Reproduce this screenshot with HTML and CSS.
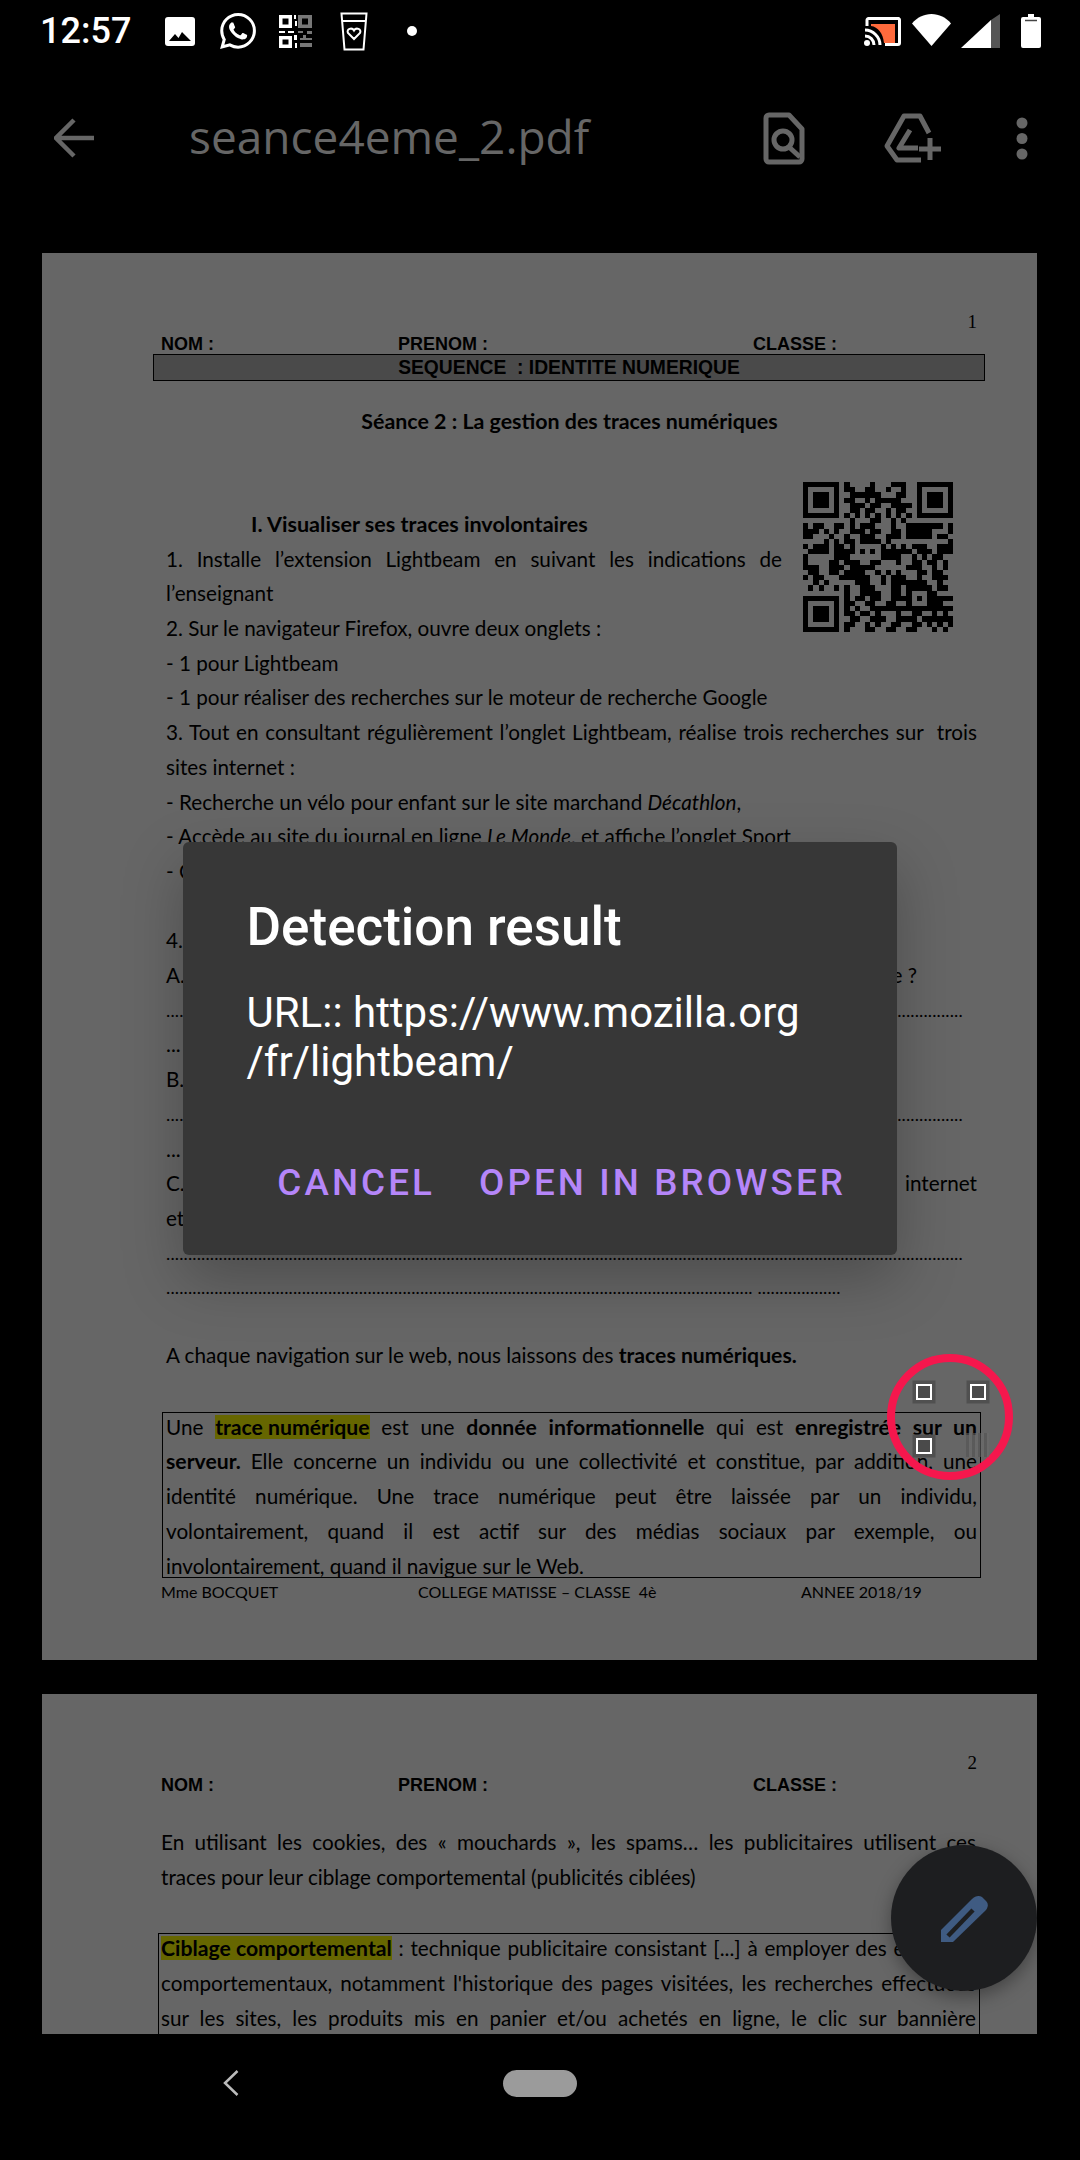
FILE: index.html
```html
<!DOCTYPE html>
<html lang="fr">
<head>
    <meta charset="UTF-8">
    <meta name="viewport" content="width=device-width, initial-scale=1.0">
    <title>seance4eme_2.pdf</title>
    <link rel="stylesheet" href="styles.css">
</head>
<body>
    <div class="status-bar">
        <span class="clock">12:57</span>
        <svg class="ic-image" viewBox="0 0 30 29"><rect width="30" height="29" rx="3" fill="#fff"/><path d="M4 24l6-7 3.5 4 3.5-6 9 9z" fill="#000"/></svg>
        <svg class="ic-whatsapp" viewBox="0 0 24 24"><path fill="#fff" d="M17.472 14.382c-.297-.149-1.758-.867-2.03-.967-.273-.099-.471-.148-.67.15-.197.297-.767.966-.94 1.164-.173.199-.347.223-.644.075-.297-.15-1.255-.463-2.39-1.475-.883-.788-1.48-1.761-1.653-2.059-.173-.297-.018-.458.13-.606.134-.133.298-.347.446-.52.149-.174.198-.298.298-.497.099-.198.05-.371-.025-.52-.075-.149-.669-1.612-.916-2.207-.242-.579-.487-.5-.669-.51-.173-.008-.371-.01-.57-.01-.198 0-.52.074-.792.372-.272.297-1.04 1.016-1.04 2.479 0 1.462 1.065 2.875 1.213 3.074.149.198 2.096 3.2 5.077 4.487.709.306 1.262.489 1.694.625.712.227 1.36.195 1.871.118.571-.085 1.758-.719 2.006-1.413.248-.694.248-1.289.173-1.413-.074-.124-.272-.198-.57-.347m-5.421 7.403h-.004a9.87 9.87 0 01-5.031-1.378l-.361-.214-3.741.982.998-3.648-.235-.374a9.86 9.86 0 01-1.51-5.26c.001-5.45 4.436-9.884 9.888-9.884 2.64 0 5.122 1.03 6.988 2.898a9.825 9.825 0 012.893 6.994c-.003 5.45-4.437 9.884-9.885 9.884m8.413-18.297A11.815 11.815 0 0012.05 0C5.495 0 .16 5.335.157 11.892c0 2.096.547 4.142 1.588 5.945L.057 24l6.305-1.654a11.882 11.882 0 005.683 1.448h.005c6.554 0 11.89-5.335 11.893-11.893a11.821 11.821 0 00-3.48-8.413z"/></svg>
        <svg class="ic-qr" viewBox="0 0 36 35">
            <path d="M1 1h13v13H1zM4.500 4.500h6v6h-6zM1 22h13v12H1zM4.500 25.500h6v5h-6z" fill="#fff" fill-rule="evenodd"/>
            <path d="M20 1h14v13H20zM24 4.500h6v6h-6z" fill="#777" fill-rule="evenodd"/>
            <path d="M16 1h2v4h-2zM17 7h2v5h-2zM1 17h6v2H1zM10 17h6v2h-6zM16 21h3v5h-3zM17 29h2v5h-2z" fill="#fff"/>
            <path d="M20 17h5v2h-5zM29 17h5v3h-5zM22 24h12v2H22zM22 29h12v4H22zM25 21h3v3h-3z" fill="#777"/>
        </svg>
        <svg class="ic-cup" viewBox="0 0 28 39"><path d="M1.500 1.500h25l-3 36h-19zM2 9h24" fill="none" stroke="#fff" stroke-width="2"/><path d="M14 27l-6-6c-2-4 4-6 6-2.500 2-3.500 8-1.500 6 2.500z" fill="none" stroke="#fff" stroke-width="2"/></svg>
        <span class="notif-dot"></span>
        <svg class="ic-cast" viewBox="0 0 37 29"><path d="M3 9V3a1.500 1.500 0 0 1 1.500-1.500h29A1.500 1.500 0 0 1 35.500 3v23a1.500 1.500 0 0 1-1.500 1.500H21" fill="none" stroke="#fff" stroke-width="3"/><path d="M7 7h24v19H20C19 16 14 10 7 9z" fill="#ff6a3c"/><path d="M1 13c8 0 15 7 15 15M1 19c5 0 9 4 9 9" fill="none" stroke="#fff" stroke-width="3"/><circle cx="3" cy="26" r="3" fill="#fff"/></svg>
        <svg class="ic-wifi" viewBox="0 0 39 32"><path d="M0 9.500C5 3.500 12 0 19.500 0S34 3.500 39 9.500L19.500 32z" fill="#fff"/></svg>
        <svg class="ic-signal" viewBox="0 0 39 34"><path d="M0 34L30 6v28z" fill="#fff"/><path d="M30 6l9-6v34h-9z" fill="#555"/></svg>
        <svg class="ic-battery" viewBox="0 0 20 34"><path d="M7 0h6v3h5a2 2 0 0 1 2 2v27a2 2 0 0 1-2 2H2a2 2 0 0 1-2-2V5a2 2 0 0 1 2-2h5z" fill="#fff"/><path d="M4 6.500h12" stroke="#444" stroke-width="1.500"/></svg>
    </div>

    <div class="toolbar">
        <svg class="ic-back" viewBox="0 0 41 40"><path d="M40 20H3M20 2L2 20l18 18" fill="none" stroke="#666" stroke-width="4.500"/></svg>
        <span class="doc-title">seance4eme_2.pdf</span>
        <svg class="ic-docsearch" viewBox="0 0 42 53"><path d="M3 6a3 3 0 0 1 3-3h20l13 14v30a3 3 0 0 1-3 3H6a3 3 0 0 1-3-3z" fill="none" stroke="#666" stroke-width="5" stroke-linejoin="round"/><circle cx="20" cy="28" r="9" fill="none" stroke="#666" stroke-width="5"/><path d="M26 35l11 10" stroke="#666" stroke-width="5"/></svg>
        <svg class="ic-driveadd" viewBox="0 0 57 50"><path d="M45 20L36 3H20L3 33l10 14h24M26 17L15 35h19" fill="none" stroke="#666" stroke-width="5" stroke-linejoin="round"/><path d="M46 25v22M35 36h22" stroke="#666" stroke-width="5"/></svg>
        <svg class="ic-more" viewBox="0 0 12 43"><circle cx="6" cy="6" r="5.500" fill="#666"/><circle cx="6" cy="21.500" r="5.500" fill="#666"/><circle cx="6" cy="37" r="5.500" fill="#666"/></svg>
    </div>

    <main class="viewer">
        <section class="page">
            <div class="page-num">1</div>
            <div class="form-row">
                <span>NOM :</span><span>PRENOM :</span><span>CLASSE :</span>
            </div>
            <div class="sequence">SEQUENCE&nbsp; : IDENTITE NUMERIQUE</div>
            <h2 class="seance">Séance 2 : La gestion des traces numériques</h2>

            <div class="body-text">
                <div class="top-block">
                    <div class="top-text">
                        <h3 class="part-title">I. Visualiser ses traces involontaires</h3>
                        <p class="just">1. Installe l’extension Lightbeam en suivant les indications de</p>
                        <p>l’enseignant</p>
                        <p>2. Sur le navigateur Firefox, ouvre deux onglets :</p>
                    </div>
                    <svg class="qr" id="qr" viewBox="0 0 29 29" shape-rendering="crispEdges"></svg>
                </div>
                <p>- 1 pour Lightbeam</p>
                <p>- 1 pour réaliser des recherches sur le moteur de recherche Google</p>
                <p class="just">3. Tout en consultant régulièrement l’onglet Lightbeam, réalise trois recherches sur&nbsp; trois</p>
                <p>sites internet :</p>
                <p>- Recherche un vélo pour enfant sur le site marchand <em>Décathlon</em>,</p>
                <p>- Accède au site du journal en ligne <em>Le Monde</em>, et affiche l’onglet Sport</p>
                <p>- C</p>
                <p>&nbsp;</p>
                <p>4.</p>
                <p class="split split-a"><span>A.</span><span>e ?</span></p>
                <p class="dots">......................................................................................................................................................................................</p>
                <p>...</p>
                <p>B.</p>
                <p class="dots">......................................................................................................................................................................................</p>
                <p>...</p>
                <p class="split"><span>C.</span><span>internet</span></p>
                <p>et</p>
                <p class="dots">......................................................................................................................................................................................</p>
                <p class="dots">...................................................................................................................................... ...................</p>
                <p class="summary">A chaque navigation sur le web, nous laissons des <strong>traces numériques.</strong></p>
            </div>

            <div class="def-box">
                <p class="just"><span>Une</span> <mark><strong>trace numérique</strong></mark> est une <strong>donnée informationnelle</strong> qui est <strong>enregistrée sur un</strong></p>
                <p class="just"><strong>serveur.</strong> Elle concerne un individu ou une collectivité et constitue, par addition, une</p>
                <p class="just">identité numérique. Une trace numérique peut être laissée par un individu,</p>
                <p class="just">volontairement, quand il est actif sur des médias sociaux par exemple, ou</p>
                <p>involontairement, quand il navigue sur le Web.</p>
            </div>
            <div class="page-foot">
                <span>Mme BOCQUET</span><span>COLLEGE MATISSE – CLASSE&nbsp; 4è</span><span>ANNEE 2018/19</span>
            </div>
        </section>

        <section class="page page-two">
            <div class="page-num">2</div>
            <div class="form-row">
                <span>NOM :</span><span>PRENOM :</span><span>CLASSE :</span>
            </div>
            <div class="intro">
                <p class="just">En utilisant les cookies, des « mouchards », les spams… les publicitaires utilisent ces</p>
                <p>traces pour leur ciblage comportemental (publicités ciblées)</p>
            </div>
            <div class="def-box def-box-two">
                <p class="just"><mark><strong>Ciblage comportemental</strong></mark> : technique publicitaire consistant [...] à employer des éléments</p>
                <p class="just">comportementaux, notamment l'historique des pages visitées, les recherches effectuées</p>
                <p class="just">sur les sites, les produits mis en panier et/ou achetés en ligne, le clic sur bannière</p>
            </div>
        </section>
    </main>

    <div class="nav-bar">
        <svg class="ic-navback" viewBox="0 0 16 26"><path d="M14.500 1L2 13l12.500 12" fill="none" stroke="#bbb" stroke-width="2.500"/></svg>
        <span class="nav-pill"></span>
    </div>

    <!-- Scan marker over the page -->
    <div class="scan-marker">
        <span class="scan-ring"></span>
        <span class="scan-square sq-a"></span>
        <span class="scan-square sq-b"></span>
        <span class="scan-square sq-c"></span>
        <span class="scan-ghost"></span>
    </div>

    <button class="fab">
        <svg viewBox="0 0 47 47"><path d="M0 47V35L31 4c3-3 7-4 10-2l4 4c3 3 2 7-1 10L12 47z" fill="#3f5b82"/><path d="M7 41L32 15" stroke="#1d1e20" stroke-width="4.500"/></svg>
    </button>

    <div class="dialog">
        <h1 class="dialog-title">Detection result</h1>
        <p class="dialog-body">URL:: https://www.mozilla.org<br>/fr/lightbeam/</p>
        <div class="dialog-actions">
            <button>CANCEL</button>
            <button>OPEN IN BROWSER</button>
        </div>
    </div>

    <script src="qr.js"></script>
</body>
</html>
```

FILE: styles.css
```css
body {
    margin: 0;
    width: 1080px;
    height: 2160px;
    overflow: hidden;
    position: relative;
    background-color: #000;
    font-family: Roboto, sans-serif;
}
p, h1, h2, h3 {
    margin: 0;
}
svg {
    display: block;
    flex: none;
}

/* status bar */
.status-bar {
    display: flex;
    align-items: center;
    height: 62px;
    padding: 0 39px 0 40px;
}
.clock {
    width: 91px;
    margin-right: 34px;
    color: #fff;
    font-size: 36px;
    font-weight: 500;
}
.ic-image { width: 30px; height: 29px; margin-right: 25px; }
.ic-whatsapp { width: 36px; height: 36px; margin-right: 22px; }
.ic-qr { width: 36px; height: 35px; margin-right: 26px; }
.ic-cup { width: 28px; height: 39px; margin-right: 39px; }
.notif-dot {
    width: 10px;
    height: 10px;
    border-radius: 50%;
    background-color: #fff;
    margin-right: auto;
}
.ic-cast { width: 37px; height: 29px; margin-right: 11px; }
.ic-wifi { width: 39px; height: 32px; margin-right: 10px; margin-top: -2px; }
.ic-signal { width: 39px; height: 34px; margin-right: 21px; }
.ic-battery { width: 20px; height: 34px; }

/* toolbar */
.toolbar {
    display: flex;
    align-items: center;
    height: 152px;
    padding-left: 54px;
}
.ic-back { width: 41px; height: 40px; margin-right: 94px; }
.doc-title {
    width: 574px;
    margin-top: -5px;
    color: #666;
    font-family: "Open Sans", sans-serif;
    font-size: 46px;
}
.ic-docsearch { width: 42px; height: 53px; margin-right: 79px; }
.ic-driveadd { width: 57px; height: 50px; margin-right: 75px; }
.ic-more { width: 12px; height: 43px; }

/* pdf pages */
.viewer {
    height: 1781px;
    margin-top: 39px;
    padding: 0 43px 0 42px;
    overflow: hidden;
}
.page {
    height: 1407px;
    margin-bottom: 34px;
    background-color: #666;
    color: #000;
    font-family: Lato, sans-serif;
    font-size: 20.700px;
    line-height: 34.7px;
}
strong {
    font-size: 21.200px;
}
.just {
    text-align: justify;
    text-align-last: justify;
}
.page-num {
    height: 20px;
    padding: 59px 60px 0 0;
    text-align: right;
    font-family: "Liberation Serif", serif;
    font-size: 19px;
    line-height: 20px;
}
.form-row {
    display: grid;
    grid-template-columns: 237px 355px 1fr;
    margin: 4px 0 0 119px;
    font-family: "Liberation Sans", sans-serif;
    font-size: 18px;
    font-weight: bold;
    line-height: 16px;
}
.sequence {
    height: 25px;
    margin: 2px 52px 0 111px;
    border: 1.500px solid #000;
    background-color: #4a4a4a;
    text-align: center;
    font-family: "Liberation Sans", sans-serif;
    font-size: 19.300px;
    font-weight: bold;
    line-height: 26px;
}
.seance {
    margin-top: 23px;
    padding-left: 60px;
    text-align: center;
    font-size: 21.400px;
    font-weight: bold;
    line-height: 34.7px;
}
.body-text {
    width: 811px;
    margin: 43.600px 0 0 124px;
}
.top-block {
    display: flex;
}
.top-text {
    width: 616px;
    padding-top: 24.600px;
}
.part-title {
    margin-left: 85px;
    font-size: 21.600px;
    font-weight: bold;
}
.qr {
    width: 150px;
    height: 150px;
    margin-left: 21px;
}
.split {
    display: flex;
    justify-content: space-between;
}
.split-a {
    width: 751px;
}
.dots {
    white-space: nowrap;
    font-size: 18px;
    letter-spacing: 0.130px;
}
.summary {
    margin-top: 33px;
}
.def-box {
    width: 819px;
    height: 166px;
    margin: 39px 0 0 120px;
    padding: 0 3px;
    box-sizing: border-box;
    border: 1.500px solid #000;
}
.def-box p:first-child {
    margin-top: -3px;
}
mark {
    background-color: #666600;
    color: inherit;
    line-height: 24px;
    display: inline-block;
}
.page-foot {
    display: grid;
    grid-template-columns: 257px 383px 1fr;
    margin: 0 0 0 119px;
    font-size: 16px;
    line-height: 28px;
}
.intro {
    width: 815px;
    margin: 32px 0 0 119px;
}
.def-box-two {
    width: 822px;
    height: 200px;
    margin: 39px 0 0 116px;
    padding: 0 3px 0 2px;
}

/* overlays */
.scan-marker {
    position: absolute;
    left: 887px;
    top: 1354px;
    width: 126px;
    height: 126px;
}
.scan-ring {
    display: block;
    width: 110px;
    height: 110px;
    border: 8px solid #f5174d;
    border-radius: 50%;
}
.scan-square {
    position: absolute;
    width: 12px;
    height: 12px;
    border: 2.500px solid #fff;
    background-color: #4a4a4a;
    box-shadow: 0 0 0 3.500px #505050;
}
.sq-a { left: 28.500px; top: 29.500px; }
.sq-b { left: 82.500px; top: 29.500px; }
.sq-c { left: 28.500px; top: 83.500px; }
.scan-ghost {
    position: absolute;
    left: 79px;
    top: 79px;
    width: 23px;
    height: 24px;
    background: repeating-linear-gradient(90deg, #555 0 3px, #6a6a6a 3px 6px);
    opacity: 0.7;
}
.fab {
    position: absolute;
    left: 891px;
    top: 1845px;
    display: flex;
    align-items: center;
    justify-content: center;
    width: 146px;
    height: 146px;
    padding: 0;
    border: 0;
    border-radius: 50%;
    background-color: #1d1e20;
    box-shadow: 0 6px 18px rgba(0, 0, 0, 0.35);
}
.fab svg {
    width: 47px;
    height: 47px;
}
.dialog {
    position: absolute;
    left: 183px;
    top: 842px;
    width: 714px;
    height: 413px;
    box-sizing: border-box;
    padding: 55px 51px 0 63.500px;
    border-radius: 6px;
    background-color: #373737;
    box-shadow: 0 24px 60px rgba(0, 0, 0, 0.25);
    color: #fff;
}
.dialog-title {
    font-size: 53px;
    font-weight: 500;
    line-height: 60px;
}
.dialog-body {
    margin-top: 32px;
    font-size: 42px;
    line-height: 48.500px;
}
.dialog-actions {
    display: flex;
    justify-content: flex-end;
    gap: 44px;
    margin-top: 75px;
}
.dialog-actions button {
    padding: 0;
    border: 0;
    background: none;
    color: #b586f9;
    font-family: Roboto, sans-serif;
    font-size: 36.750px;
    font-weight: 500;
    letter-spacing: 3.100px;
    line-height: 44px;
}

/* nav bar */
.nav-bar {
    display: flex;
    align-items: center;
    height: 126px;
    padding: 0 0 28px 223px;
    box-sizing: border-box;
}
.ic-navback { width: 16px; height: 26px; margin-right: 264px; }
.nav-pill {
    width: 74px;
    height: 27px;
    border-radius: 13.500px;
    background-color: #9b9b9b;
}
```

FILE: qr.js
```js
// modules of the QR code, one string per row
const rows = [
    '11111110100001000111001111111',
    '10000010110011001001001000001',
    '10111010011111100011001011101',
    '10111010110010111110001011101',
    '10111010011101100111101011101',
    '10000010011011001011001000001',
    '11111110101010101010101111111',
    '00000000010001100101000000000',
    '10110011010111000100111111101',
    '11101010011101100110111110001',
    '11000100100111001110111110110',
    '00001010110111101000000000001',
    '10111011010000010101011100111',
    '01111011110101011111101110111',
    '10000011100000011110010101100',
    '10000110111001100010011011010',
    '11100111011111000000111001010',
    '01100110111100101010001101100',
    '10110001111110010111001001110',
    '00101000001110010111111100100',
    '01010010100111000110111110110',
    '00000000100111100110100011000',
    '11111110101101100111101011111',
    '10000010110011001100100011100',
    '10111010101001111111111111111',
    '10111010110110100010011001010',
    '10111010011001110011110111111',
    '10000010110010100110011010101',
    '11111110100011001100110001010'
];

let d = '';
rows.forEach(function(row, y) {
    for (let x = 0; x < 29; x++) {
        if (row[x] === '1') {
            d += 'M' + x + ' ' + y + 'h1v1h-1z';
        }
    }
});
const path = document.createElementNS('http://www.w3.org/2000/svg', 'path');
path.setAttribute('d', d);
document.getElementById('qr').appendChild(path);
```
